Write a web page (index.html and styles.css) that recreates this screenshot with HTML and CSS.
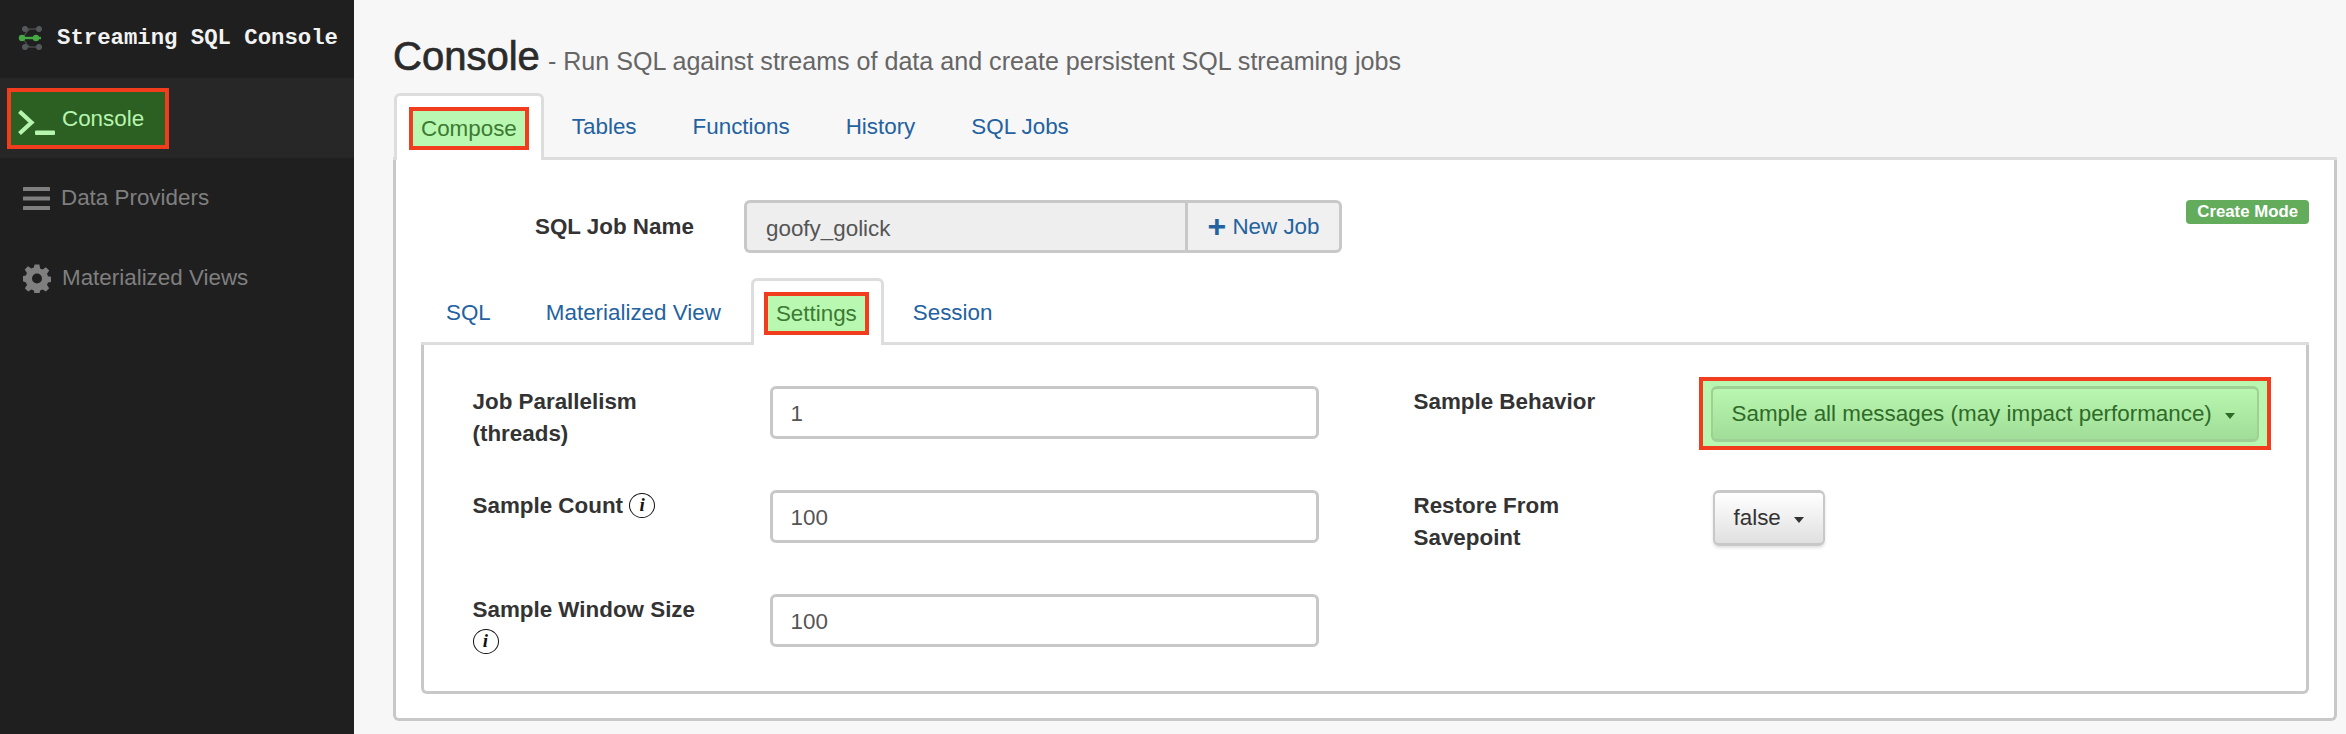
FILE: index.html
```html
<!DOCTYPE html>
<html lang="en">
  <head>
    <meta charset="UTF-8" />
    <title>Streaming SQL Console</title>
    <link rel="stylesheet" href="styles.css">
  </head>
  <body>
    <div class="app">
      <!-- Sidebar -->
      <aside class="sidebar">
        <div class="brand">
          <svg class="brand-logo" width="26" height="24" viewBox="0 0 26 24">
            <g fill="#55585a" stroke="#55585a">
              <path d="M5 3h17M5 21h17M3 12C7 12 8 3 13 3M3 12C7 12 8 21 13 21" fill="none" stroke-width="1.5" opacity="0.7"/>
              <circle cx="7" cy="3" r="2.6"/>
              <circle cx="21" cy="3" r="2.6"/>
              <circle cx="7" cy="21" r="2.6"/>
              <circle cx="21" cy="21" r="2.6"/>
            </g>
            <path d="M3 12h20" stroke="#45a845" stroke-width="2.4"/>
            <circle cx="4" cy="12" r="3.2" fill="#45a845"/>
            <circle cx="18" cy="12" r="3.2" fill="#45a845"/>
          </svg>
          <span>Streaming SQL Console</span>
        </div>
        <nav>
          <div class="nav-row nav-row-active">
            <a class="nav-current">
              <svg width="38" height="26" viewBox="0 0 38 26">
                <path d="M1.500 1.500 13.500 12.500 1.500 23.500" fill="none" stroke="currentColor" stroke-width="4.200"/>
                <rect x="17" y="20.500" width="20" height="4.500" rx="1" fill="currentColor"/>
              </svg>
              Console
            </a>
          </div>
          <div class="nav-row">
            <a class="nav-link">
              <svg width="27" height="23" viewBox="0 0 27 23" fill="currentColor">
                <rect width="27" height="4" y="0" rx="0.6"/>
                <rect width="27" height="4" y="9.5" rx="0.6"/>
                <rect width="27" height="4" y="19" rx="0.6"/>
              </svg>
              Data Providers
            </a>
          </div>
          <div class="nav-row">
            <a class="nav-link">
              <svg width="28" height="29" viewBox="0 0 28 28">
                <path fill="currentColor" fill-rule="evenodd" d="M11.6 0h4.800l.7 3.900 2.500 1 3.300-2.200 3.300 3.300-2.200 3.300 1 2.500 3.900.7v4.800l-3.900.7-1 2.500 2.200 3.300-3.300 3.300-3.300-2.200-2.500 1-.7 3.900h-4.800l-.7-3.900-2.500-1-3.300 2.200-3.300-3.300 2.200-3.300-1-2.500L-1 16.400v-4.800l3.900-.7 1-2.500L1.700 5.100 5 1.800l3.300 2.200 2.500-1zM14 9a5 5 0 1 0 0 10 5 5 0 0 0 0-10z"/>
              </svg>
              Materialized Views
            </a>
          </div>
        </nav>
      </aside>

      <!-- Main content -->
      <main class="main">
        <h1 class="title">Console <small>- Run SQL against streams of data and create persistent SQL streaming jobs</small></h1>

        <ul class="tabs">
          <li class="tab tab-active"><a class="tab-marked">Compose</a></li>
          <li class="tab"><a>Tables</a></li>
          <li class="tab"><a>Functions</a></li>
          <li class="tab"><a>History</a></li>
          <li class="tab"><a>SQL Jobs</a></li>
        </ul>

        <section class="panel">
          <div class="job-row">
            <label class="job-label">SQL Job Name</label>
            <div class="job-group">
              <div class="job-input">goofy_golick</div>
              <button class="job-button"><span class="plus">+</span> New Job</button>
            </div>
            <span class="badge">Create Mode</span>
          </div>

          <ul class="tabs tabs-inner">
            <li class="tab"><a>SQL</a></li>
            <li class="tab"><a>Materialized View</a></li>
            <li class="tab tab-active"><a class="tab-marked">Settings</a></li>
            <li class="tab"><a>Session</a></li>
          </ul>

          <div class="settings">
            <label class="field-label">Job Parallelism<br>(threads)</label>
            <div class="text-input">1</div>
            <label class="field-label">Sample Behavior</label>
            <div class="marked-control">
              <button class="dropdown dropdown-green">Sample all messages (may impact performance)<span class="caret"></span></button>
            </div>

            <label class="field-label">Sample Count <span class="info">i</span></label>
            <div class="text-input">100</div>
            <label class="field-label">Restore From<br>Savepoint</label>
            <div>
              <button class="dropdown">false<span class="caret"></span></button>
            </div>

            <label class="field-label">Sample Window Size<br><span class="info info-wrapped">i</span></label>
            <div class="text-input">100</div>
          </div>
        </section>
      </main>
    </div>
  </body>
</html>
```

FILE: styles.css
```css
* {
  box-sizing: border-box;
}

body {
  margin: 0;
  height: 734px;
  overflow: hidden;
  font-family: "Liberation Sans", Arial, sans-serif;
  font-size: 22.4px;
  color: #333;
  background: #f7f7f7;
}

.app {
  display: flex;
  height: 734px;
}

/* Sidebar */
.sidebar {
  flex: 0 0 354px;
  background: #1f1f1f;
}

.brand {
  display: flex;
  align-items: center;
  height: 78px;
  padding: 0 0 2px 18px;
  gap: 13px;
  font-family: "Liberation Mono", monospace;
  font-size: 22.3px;
  font-weight: bold;
  color: #f2f2f2;
}

.nav-row {
  display: flex;
  align-items: center;
  height: 80px;
}

.nav-row-active {
  background: #272727;
  padding-left: 7px;
}

.nav-current {
  display: flex;
  align-items: center;
  width: 162px;
  height: 61px;
  gap: 6px;
  padding-left: 7px;
  padding-top: 2px;
  border: 4px solid #f23c1e;
  background: #2c5f22;
  color: #b6f5ae;
}

.nav-current svg {
  margin-top: 7px;
}

.nav-link {
  display: flex;
  align-items: center;
  gap: 11px;
  padding-left: 23px;
  color: #7f7f7f;
}

/* Heading */
.main {
  flex: 1;
  padding: 0 9px 0 39px;
}

.title {
  margin: 0;
  height: 93px;
  padding-top: 34px;
  font-size: 40px;
  line-height: 44px;
  font-weight: 500;
  color: #2b2b2b;
  -webkit-text-stroke: 0.7px #2b2b2b;
}

.title small {
  font-size: 25.1px;
  font-weight: normal;
  color: #666;
  margin-left: -3px;
  -webkit-text-stroke: 0;
}

/* Tabs */
.tabs {
  display: flex;
  height: 67px;
  margin: 0;
  padding: 0;
  list-style: none;
  border-bottom: 3px solid #ddd;
}

.tab {
  display: flex;
  align-items: center;
  height: 67px;
  padding: 0 28px;
  color: #23629f;
}

.tab-active {
  margin: 0 0 0 1px;
  padding: 0 12px;
  border: 3px solid #ddd;
  border-bottom: none;
  border-radius: 6px 6px 0 0;
  background: #fff;
}

.tab-marked {
  padding: 4px 8px;
  height: 43px;
  line-height: 27px;
  border: 4px solid #f23c1e;
  background: #b9f8b0;
  color: #3c7a34;
}

.panel {
  height: 561px;
  padding: 40px 25px 0 25px;
  border: 3px solid #ddd;
  border-top: none;
  border-right-color: #c8c8c8;
  border-bottom-color: #c8c8c8;
  border-left-color: #c8c8c8;
  border-radius: 0 0 6px 6px;
  background: #fff;
}

/* Job name row */
.job-row {
  display: flex;
  align-items: flex-start;
  height: 78px;
}

.job-label {
  width: 323px;
  padding: 14px 0 0 114px;
  font-weight: bold;
}

.job-group {
  display: flex;
  width: 598px;
  height: 53px;
}

.job-input {
  flex: 1;
  padding: 13px 19px;
  border: 3px solid #c8c8c8;
  border-right: none;
  border-radius: 6px 0 0 6px;
  background: #eee;
  color: #555;
}

.job-button {
  width: 157px;
  padding: 0;
  border: 3px solid #c8c8c8;
  border-radius: 0 6px 6px 0;
  background: #f0f0f0;
  font: inherit;
  color: #23629f;
}

.plus {
  font-size: 32px;
  line-height: 24px;
  font-weight: bold;
  vertical-align: -3px;
}

.badge {
  margin-left: auto;
  height: 24px;
  padding: 0 11px;
  border-radius: 4px;
  background: #62ac5c;
  color: #fff;
  font-size: 16.8px;
  line-height: 23px;
  font-weight: bold;
}

.tabs-inner .tab {
  padding: 3px 25px 0;
}

.tabs-inner .tab:nth-child(2) {
  padding: 3px 29px 0 30px;
}

.tabs-inner .tab-active {
  margin: 0 2px 0 1px;
  padding: 0 12px 0 10px;
}

.tabs-inner .tab:last-child {
  padding-left: 27px;
}

/* Settings form */
.settings {
  display: grid;
  grid-template-columns: 297px 549px 394px 560px;
  grid-auto-rows: 53px;
  row-gap: 51px;
  height: 349px;
  padding: 41px 0 0 48.5px;
  border: 3px solid #c8c8c8;
  border-top: none;
  border-radius: 0 0 6px 6px;
}

.field-label {
  line-height: 32px;
  font-weight: bold;
}

.field-label:nth-child(4n + 3) {
  margin-left: 95px;
}

.info {
  display: inline-flex;
  align-items: center;
  justify-content: center;
  width: 26px;
  height: 25px;
  border: 1.5px solid #111;
  border-radius: 50%;
  font-family: "Liberation Serif", serif;
  font-style: italic;
  font-size: 19px;
  color: #111;
  vertical-align: 2px;
}

.info-wrapped {
  vertical-align: 2px;
}

.text-input {
  height: 53px;
  padding: 12px 18px;
  border: 3px solid #c8c8c8;
  border-radius: 6px;
  background: #fff;
  color: #555;
}

.marked-control {
  width: 572px;
  height: 73px;
  margin: -9px 0 0 -14px;
  padding: 5px 8px 4px 8px;
  border: 4px solid #f23c1e;
  background: #b9f6b0;
}

.dropdown {
  display: inline-flex;
  align-items: center;
  height: 56px;
  padding: 0 19px;
  border: 2px solid #c8c8c8;
  border-top-width: 3px;
  border-bottom-width: 3px;
  border-radius: 6px;
  background: linear-gradient(#fff, #e0e0e0);
  box-shadow: 0 2px 3px rgba(0, 0, 0, 0.12);
  font: inherit;
  white-space: nowrap;
  color: #333;
}

.dropdown-green {
  width: 548px;
  border-color: #9ed096;
  background: linear-gradient(#b9f6b0, #a0dd98);
  box-shadow: none;
  color: #2f6b28;
}

.caret {
  width: 0;
  height: 0;
  margin: 3px 0 0 13px;
  border-top: 6px solid currentColor;
  border-left: 5.5px solid transparent;
  border-right: 5.5px solid transparent;
}
```
